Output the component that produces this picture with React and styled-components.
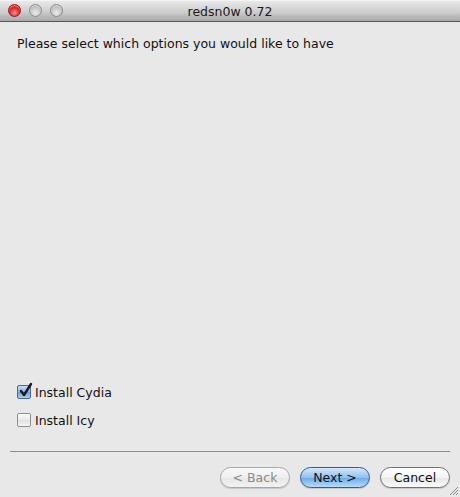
import React, { useState } from "react";
import styled, { createGlobalStyle } from "styled-components";

const Global = createGlobalStyle`
  html, body { margin: 0; padding: 0; }
  body { width: 460px; height: 497px; overflow: hidden; background: #e8e8e8; font-family: "DejaVu Sans", "Liberation Sans", sans-serif; }
  #root { width: 460px; height: 497px; }
`;

const Window = styled.div`
  width: 460px;
  height: 497px;
  display: flex;
  flex-direction: column;
  background: #e8e8e8;
  position: relative;
`;

const TitleBar = styled.div`
  height: 22px;
  flex: none;
  box-sizing: border-box;
  background: linear-gradient(#e9e9e9, #cfcfcf 50%, #a9a9a9);
  border-top: 1px solid #f4f4f4;
  border-bottom: 1px solid #565656;
  display: flex;
  align-items: center;
  position: relative;
`;

const Lights = styled.div`
  display: flex;
  gap: 8px;
  padding-left: 8px;
  position: absolute;
  left: 0;
  top: 3px;
`;

const Light = styled.div`
  width: 13px;
  height: 13px;
  border-radius: 50%;
  box-sizing: border-box;
  border: 1px solid ${(p) => (p.$red ? "#8a1a1a" : "#8c8c8c")};
  background: ${(p) =>
    p.$red
      ? "radial-gradient(circle at 50% 70%, #ff9a9a 0%, #f02a2a 45%, #a80606 100%)"
      : "radial-gradient(circle at 50% 70%, #ececec 0%, #c8c8c8 50%, #9c9c9c 100%)"};
  box-shadow: inset 0 1px 1px rgba(255,255,255,0.6);
`;

const Title = styled.div`
  flex: 1;
  text-align: center;
  color: #1a1a1a;
  padding-top: 1px;
  font-size: 12.5px;
`;

const Body = styled.div`
  flex: 1;
  display: flex;
  flex-direction: column;
  padding: 14px 10px 0 17px;
`;

const Prompt = styled.div`
  font-size: 12.5px;
  color: #111;
`;

const Spacer = styled.div`
  flex: 1;
`;

const Options = styled.div`
  display: flex;
  flex-direction: column;
  gap: 14px;
  padding-bottom: 24px;
`;

const Option = styled.label`
  display: flex;
  align-items: center;
  gap: 4px;
  font-size: 12.5px;
  color: #111;
  height: 14px;
`;

const Box = styled.span`
  width: 14px;
  height: 14px;
  box-sizing: border-box;
  border: 1px solid ${(p) => (p.$on ? "#4a6c98" : "#8e8e8e")};
  border-radius: 2px;
  background: ${(p) =>
    p.$on
      ? "linear-gradient(#c6dcf5, #8cb6e6 50%, #6aa0dc 51%, #a8cdf3)"
      : "linear-gradient(#fdfdfd, #eaeaea 50%, #e0e0e0 51%, #f4f4f4)"};
  position: relative;
  flex: none;
`;

const Check = styled.svg`
  position: absolute;
  left: 1px;
  top: -4px;
`;

const Separator = styled.div`
  height: 1px;
  background: #8c8c8c;
  margin-left: -7px;
  margin-right: 0;
`;

const ButtonRow = styled.div`
  display: flex;
  justify-content: flex-end;
  gap: 10px;
  padding: 15px 0 9px;
`;

const Button = styled.button`
  width: 70px;
  height: 21px;
  border-radius: 11px;
  font-family: "DejaVu Sans", "Liberation Sans", sans-serif;
  font-size: 12.5px;
  padding: 0;
  color: ${(p) => (p.disabled ? "#8a8a8a" : "#111")};
  border: 1px solid ${(p) => (p.$primary ? "#3a5a8c" : p.disabled ? "#a6a6a6" : "#707070")};
  background: ${(p) =>
    p.$primary
      ? "linear-gradient(#d6e8fb, #93c0ef 50%, #6ba8ea 51%, #b4dcfb)"
      : p.disabled
      ? "linear-gradient(#f8f8f8, #efefef 50%, #e6e6e6 51%, #f2f2f2)"
      : "linear-gradient(#ffffff, #f3f3f3 50%, #e6e6e6 51%, #fafafa)"};
  box-shadow: 0 1px 1px rgba(0,0,0,0.15);
`;

const Grip = styled.svg`
  position: absolute;
  right: 1px;
  bottom: 1px;
`;

const CheckMark = () => (
  <Check width="14" height="16" viewBox="0 0 14 16">
    <path d="M2 9 L5 13 L12 2" fill="none" stroke="#1a1a1a" strokeWidth="2.4" strokeLinecap="round" strokeLinejoin="round" />
  </Check>
);

export default function App() {
  const [cydia, setCydia] = useState(true);
  const [icy, setIcy] = useState(false);
  return (
    <Window>
      <Global />
      <TitleBar>
        <Lights>
          <Light $red />
          <Light />
          <Light />
        </Lights>
        <Title>redsn0w 0.72</Title>
      </TitleBar>
      <Body>
        <Prompt>Please select which options you would like to have</Prompt>
        <Spacer />
        <Options>
          <Option onClick={() => setCydia(!cydia)}>
            <Box $on={cydia}>{cydia && <CheckMark />}</Box>
            Install Cydia
          </Option>
          <Option onClick={() => setIcy(!icy)}>
            <Box $on={icy}>{icy && <CheckMark />}</Box>
            Install Icy
          </Option>
        </Options>
        <Separator />
        <ButtonRow>
          <Button disabled>&lt; Back</Button>
          <Button $primary>Next &gt;</Button>
          <Button>Cancel</Button>
        </ButtonRow>
      </Body>
      <Grip width="11" height="11" viewBox="0 0 11 11">
        <path d="M10 2 L2 10 M10 5 L5 10 M10 8 L8 10" stroke="#8a8a8a" strokeWidth="1" />
      </Grip>
    </Window>
  );
}
